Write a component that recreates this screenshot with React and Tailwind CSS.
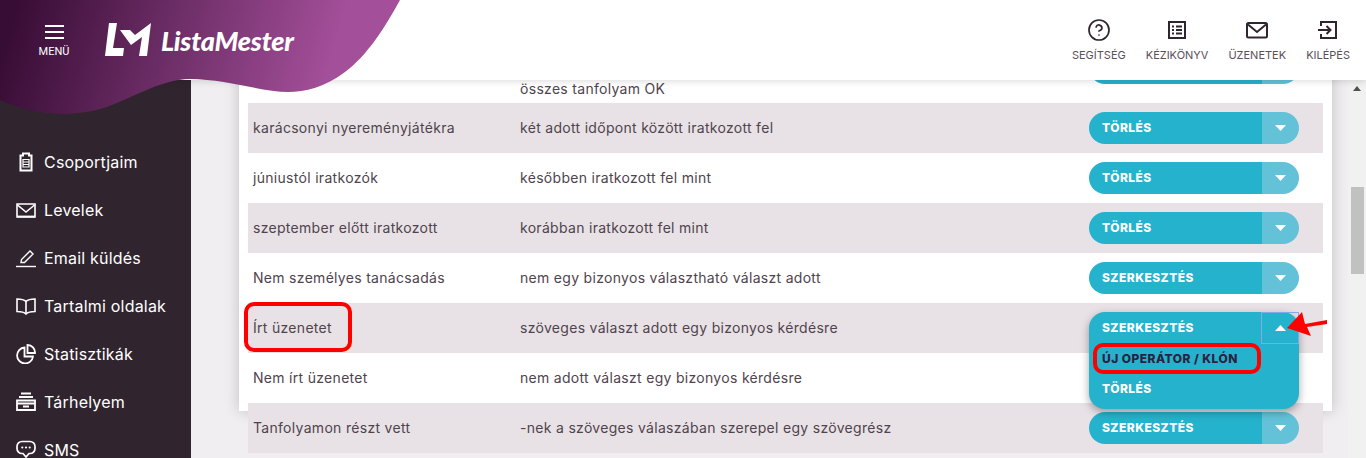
import { CircleHelp } from "lucide-react";

const rows = [
  { name: "karácsonyi nyereményjátékra", rule: "két adott időpont között iratkozott fel", action: "TÖRLÉS", shaded: true },
  { name: "júniustól iratkozók", rule: "későbben iratkozott fel mint", action: "TÖRLÉS" },
  { name: "szeptember előtt iratkozott", rule: "korábban iratkozott fel mint", action: "TÖRLÉS", shaded: true },
  { name: "Nem személyes tanácsadás", rule: "nem egy bizonyos választható választ adott", action: "SZERKESZTÉS" },
  { name: "Írt üzenetet", rule: "szöveges választ adott egy bizonyos kérdésre", action: "SZERKESZTÉS", shaded: true, open: true },
  { name: "Nem írt üzenetet", rule: "nem adott választ egy bizonyos kérdésre", action: "SZERKESZTÉS" },
  { name: "Tanfolyamon részt vett", rule: "-nek a szöveges válaszában szerepel egy szövegrész", action: "SZERKESZTÉS", shaded: true },
];

const iconProps = { width: 20, height: 20, viewBox: "0 0 20 20", fill: "none", stroke: "currentColor", strokeWidth: 1.6 };

function IconClipboard() {
  return (
    <svg {...iconProps}>
      <path d="M7 3.5V1.5h6v2h2.5v15h-11v-15z" strokeWidth="2" />
      <path d="M7 7.5h6v7.5H7z M7 10h6 M7 12.5h6" strokeWidth="1.2" />
    </svg>
  );
}
function IconMail() {
  return (
    <svg {...iconProps}>
      <path d="M1 4h18v13H1z" />
      <path d="M1.5 5l8.5 7 8.5-7" />
      <path d="M1 16.5h18" strokeWidth="1.8" />
    </svg>
  );
}
function IconPen() {
  return (
    <svg {...iconProps}>
      <path d="M5 14.5l.5-3L14 3l3 3-8.5 8.5z" strokeWidth="1.4" />
      <path d="M0 18.5h20" strokeWidth="1.4" />
    </svg>
  );
}
function IconBook() {
  return (
    <svg {...iconProps}>
      <path d="M10 5.5C8 3.5 4.5 3 1 3v12.5c3.5 0 7 .5 9 2.5 2-2 5.5-2.5 9-2.5V3c-3.5 0-7 .5-9 2.5z" />
      <path d="M10 5.5V18" />
    </svg>
  );
}
function IconPie() {
  return (
    <svg {...iconProps}>
      <path d="M8.5 3.5a8 8 0 1 0 8.5 9h-8.5z" strokeWidth="1.8" />
      <path d="M11.5 1a7.5 7.5 0 0 1 7.5 8h-7.5z" strokeWidth="1.8" />
    </svg>
  );
}
function IconStorage() {
  return (
    <svg {...iconProps}>
      <path d="M5 1.5h10 M3 5h14" strokeWidth="1.8" />
      <path d="M1 8.5h18v9.5H1z M1 11.5h18 M7 14.5h6" strokeWidth="1.8" />
    </svg>
  );
}
function IconChat() {
  return (
    <svg {...iconProps}>
      <path d="M6 1.5h8a5 5 0 0 1 5 5v2a5 5 0 0 1-5 5h-1l-3 3.5-3-3.5H6a5 5 0 0 1-5-5v-2a5 5 0 0 1 5-5z" strokeWidth="1.7" />
      <circle cx="6.3" cy="7.5" r="1.1" fill="currentColor" stroke="none" />
      <circle cx="10" cy="7.5" r="1.1" fill="currentColor" stroke="none" />
      <circle cx="13.7" cy="7.5" r="1.1" fill="currentColor" stroke="none" />
    </svg>
  );
}

const menuItems = [
  { label: "Csoportjaim", Icon: IconClipboard },
  { label: "Levelek", Icon: IconMail },
  { label: "Email küldés", Icon: IconPen },
  { label: "Tartalmi oldalak", Icon: IconBook },
  { label: "Statisztikák", Icon: IconPie },
  { label: "Tárhelyem", Icon: IconStorage },
  { label: "SMS", Icon: IconChat },
];

function ManualIcon() {
  return (
    <svg width="20" height="20" viewBox="0 0 20 20" fill="none" stroke="currentColor">
      <path d="M2 2h16v16H2z" strokeWidth="2" />
      <path d="M5 6.5h2 M9 6.5h6 M5 10h2 M9 10h6 M5 13.5h2 M9 13.5h6" strokeWidth="1.8" />
    </svg>
  );
}
function EnvelopeIcon() {
  return (
    <svg width="22" height="18" viewBox="0 0 22 18" fill="none" stroke="currentColor" strokeWidth="2">
      <rect x="1" y="2" width="20" height="14.5" rx="1.5" />
      <path d="M2 3.5l9 7.5 9-7.5" />
    </svg>
  );
}
function ExitIcon() {
  return (
    <svg width="20" height="20" viewBox="0 0 20 20" fill="none" stroke="currentColor" strokeWidth="2">
      <path d="M3 6V2h15v16H3v-4" />
      <path d="M0 10h12 M8.5 6l4 4-4 4" />
    </svg>
  );
}

const topLinks = [
  { label: "SEGÍTSÉG", icon: <CircleHelp size={24} strokeWidth={1.7} /> },
  { label: "KÉZIKÖNYV", icon: <ManualIcon /> },
  { label: "ÜZENETEK", icon: <EnvelopeIcon /> },
  { label: "KILÉPÉS", icon: <ExitIcon /> },
];

function Caret({ up }) {
  return (
    <svg width="11" height="6" viewBox="0 0 11 6" fill="white">
      <path d={up ? "M5.5 0L11 6H0z" : "M0 0h11L5.5 6z"} />
    </svg>
  );
}

function ActionButton({ label, open }) {
  if (open) {
    return (
      <div className="relative h-8 w-[210px]">
        <div className="absolute top-0 left-0 z-10 w-[210px] h-[97px] rounded-2xl bg-[#25b2cd] shadow-[0_3px_8px_rgba(0,0,0,0.35)] text-xs font-extrabold text-white tracking-[0.45px]">
          <div className="flex h-8 items-center justify-between">
            <span className="pl-[13px]">{label}</span>
            <span className="flex h-8 w-[38px] items-center justify-center border border-[#7fa9ea]">
              <Caret up />
            </span>
          </div>
          <div className="pl-[13px] pt-[6px] leading-[18px] text-[#2e2140]">ÚJ OPERÁTOR / KLÓN</div>
          <div className="pl-[13px] pt-[12px] leading-[18px]">TÖRLÉS</div>
          <div className="absolute top-[31px] left-1 w-[168px] h-[31px] rounded-[10px] border-4 border-[#ff0000]" />
        </div>
        <svg className="absolute z-20 top-0 left-[198px]" width="40" height="24" viewBox="0 0 40 24" fill="#ff0000">
          <path d="M0 16L15 0l3 12 22-4 0 4-20 3 4 9z" />
        </svg>
      </div>
    );
  }
  return (
    <div className="flex h-8 w-[210px] overflow-hidden rounded-2xl text-xs font-extrabold text-white tracking-[0.45px]">
      <div className="flex flex-1 items-center bg-[#25b2cd] pl-[13px]">{label}</div>
      <div className="flex w-[37px] items-center justify-center bg-[#63c2d8]">
        <Caret />
      </div>
    </div>
  );
}

export default function App() {
  return (
    <div className="relative flex h-[458px] w-[1366px] flex-col overflow-hidden bg-white font-[Inter,sans-serif]">
      {/* top bar, the purple wave hangs out of it */}
      <header className="relative z-20 flex h-20 shrink-0 items-center justify-between bg-white pr-4 shadow-[0_2px_6px_rgba(0,0,0,0.12)]">
        <svg className="absolute top-0 left-0" width="400" height="116" viewBox="0 0 400 116">
          <defs>
            <linearGradient id="wave" gradientUnits="userSpaceOnUse" x1="15" y1="15" x2="320" y2="100">
              <stop offset="0" stopColor="#380d35" />
              <stop offset="1" stopColor="#a34f99" />
            </linearGradient>
          </defs>
          <path
            d="M0 0H400C385 27 368 55 345 72C325 87 305 92 288 92C262 92 225 79 190 79C160 79 130 100 100 109C75 116 35 117 0 100Z"
            fill="url(#wave)"
          />
        </svg>
        <div className="relative flex items-center">
          <button className="mt-[4px] flex w-[108px] flex-col items-center pr-[0px] text-white">
            <span className="flex flex-col gap-1">
              <span className="h-0.5 w-[19px] bg-white" />
              <span className="h-0.5 w-[19px] bg-white" />
              <span className="h-0.5 w-[19px] bg-white" />
            </span>
            <span className="mt-[6px] font-[Roboto,sans-serif] text-[11px] leading-[14px]">MENÜ</span>
          </button>
          <svg className="-ml-[3px]" width="47" height="34" viewBox="0 0 47 34" fill="white">
            <path d="M4 0h8L8 25h11l-1 8H0z" />
            <path d="M15 7h10l5 5L46 0l-4 33h-8l3-19-11 8z" />
          </svg>
          <span className="ml-[9px] text-[27px] leading-none font-black italic text-white tracking-[-0.2px] font-[Lato,sans-serif]">ListaMester</span>
        </div>
        <nav className="relative flex items-start gap-5 text-[#30252e]">
          {topLinks.map((link) => (
            <a key={link.label} className="flex flex-col items-center">
              <span className="flex h-6 items-center">{link.icon}</span>
              <span className="mt-[5px] text-[11px] leading-4 text-[#5b4f58]">{link.label}</span>
            </a>
          ))}
        </nav>
      </header>

      <div className="flex min-h-0 flex-1">
        <aside className="w-[191px] shrink-0 bg-[#30252e] pt-[58px] text-white">
          {menuItems.map(({ label, Icon }) => (
            <a key={label} className="flex h-12 items-center gap-2 pl-4 text-base tracking-[0.2px]">
              <Icon />
              <span>{label}</span>
            </a>
          ))}
        </aside>

        <main className="min-w-0 flex-1 overflow-hidden bg-[#f1eef1] pr-4 pl-12">
          <div className="h-full bg-white px-[9px] text-sm text-[#4f444d] shadow-[0_0_14px_rgba(0,0,0,0.2)]">
            <div className="-mt-[47px] grid h-[70px] grid-cols-[272px_569px_1fr] items-center">
              <div />
              <div className="self-end pb-[2px] leading-6 tracking-[0.3px]">
                feliratkozott egy bizonyos kurzusra
                <br />
                összes tanfolyam OK
              </div>
              <ActionButton label="SZERKESZTÉS" />
            </div>
            {rows.map((row) => (
              <div
                key={row.name}
                className={`relative grid h-[50px] grid-cols-[272px_569px_1fr] items-center pl-[5px] ${row.shaded ? "bg-[#e8e2e6]" : "bg-white"}`}
              >
                <div className="tracking-[0.3px]">{row.name}</div>
                <div className="-ml-[5px] tracking-[0.3px]">{row.rule}</div>
                <div className="-ml-[5px]">
                  <ActionButton label={row.action} open={row.open} />
                </div>
                {row.open && <div className="absolute -top-px -left-1 h-[50px] w-[108px] rounded-[10px] border-4 border-[#ff0000]" />}
              </div>
            ))}
          </div>
        </main>

        {/* page scrollbar */}
        <div className="flex w-[18px] shrink-0 flex-col items-center bg-[#f1f1f1] pt-[6px]">
          <svg width="8" height="5" viewBox="0 0 8 5" fill="#505050">
            <path d="M4 0l4 5H0z" />
          </svg>
          <div className="mt-[96px] h-[87px] w-[13px] bg-[#c1c1c1]" />
        </div>
      </div>
    </div>
  );
}
